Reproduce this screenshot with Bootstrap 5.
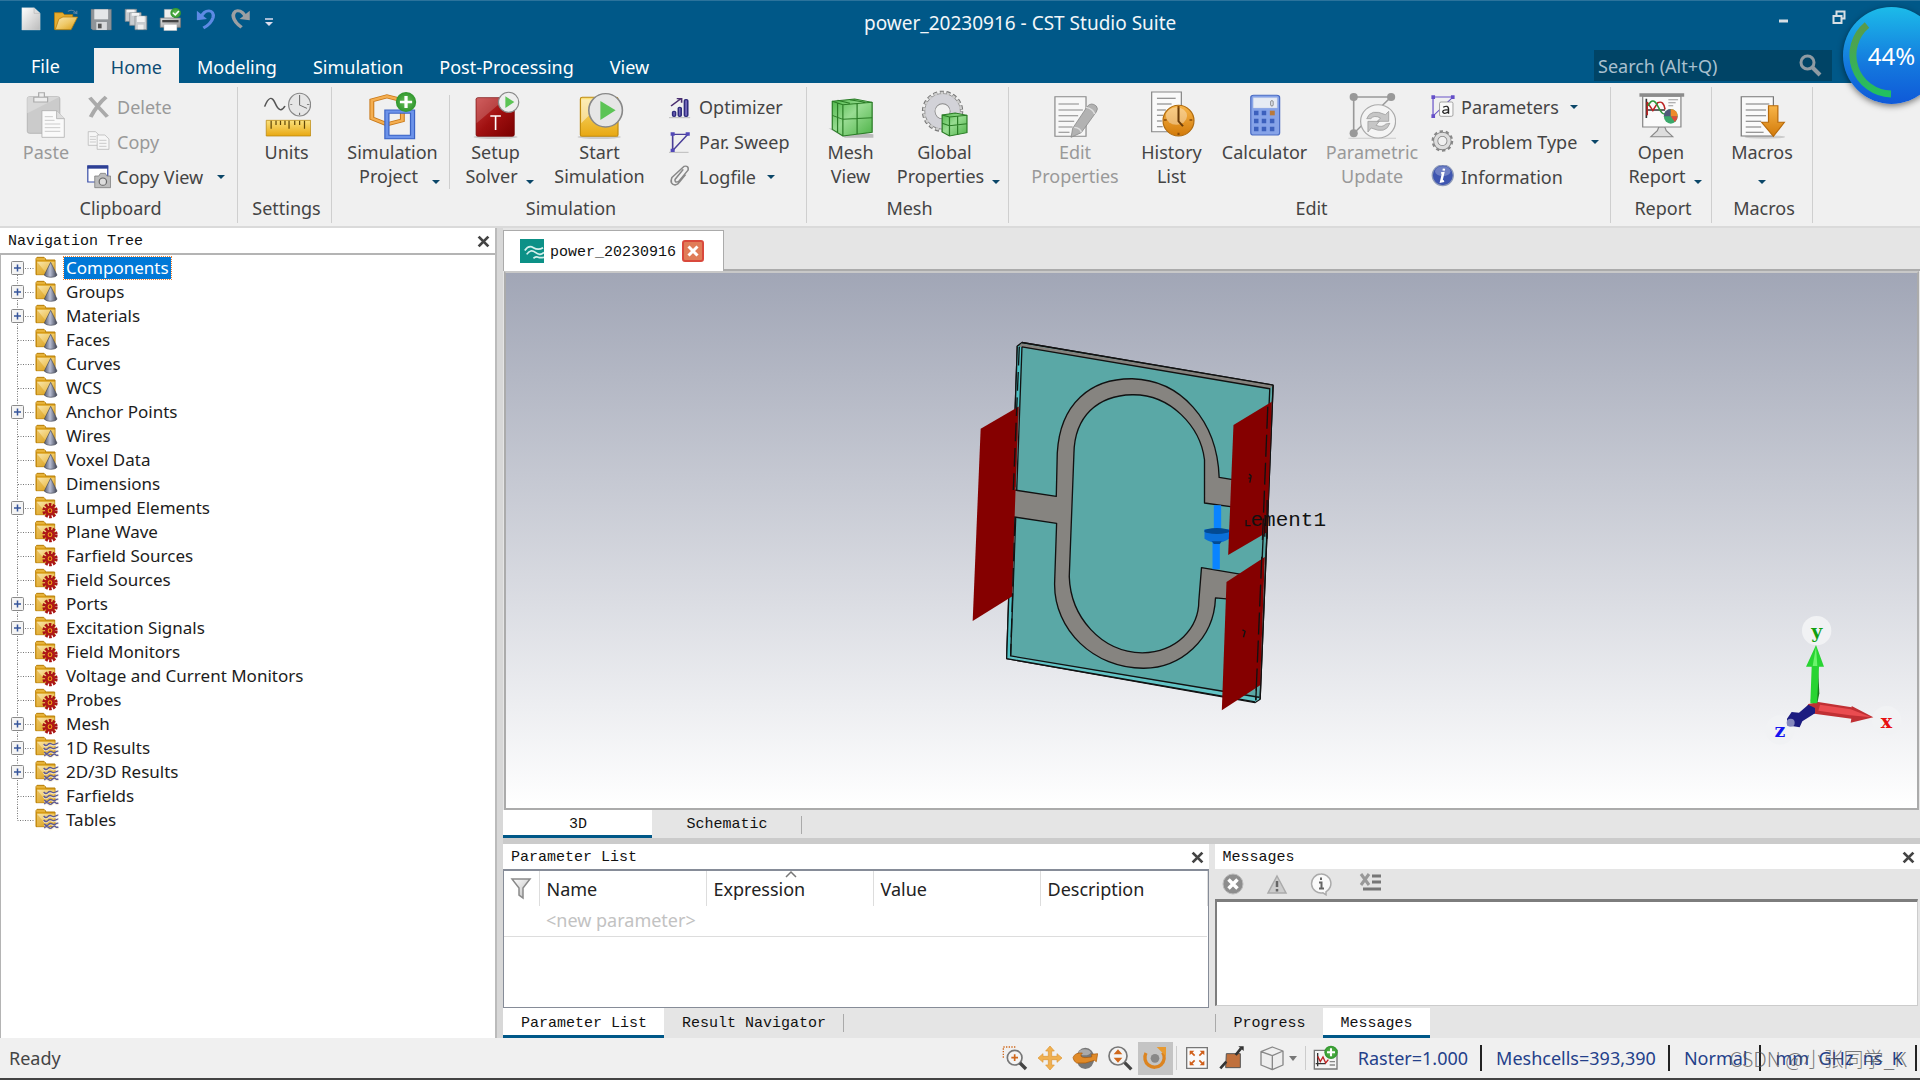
<!DOCTYPE html>
<html lang="en">
<head>
<meta charset="utf-8">
<meta name="viewport" content="width=device-width, initial-scale=1">
<title>power_20230916 - CST Studio Suite</title>
<link href="https://cdn.jsdelivr.net/npm/bootstrap@5.3.0/dist/css/bootstrap.min.css" rel="stylesheet">
<style>
:root{--brand:#005888;--panel:#e5e5e5;--ribbon:#f0f0f0;--ui:"Noto Sans","Noto Sans CJK SC",sans-serif;--fixed:"Liberation Mono","Noto Sans CJK SC",monospace}
body{font-family:var(--ui);font-size:18px;line-height:24px;color:#444;background:var(--ribbon);min-width:1200px}
svg{display:block;flex:none}
button{font:inherit;color:inherit}
.bare{background:none;border:0;padding:0}
.top-bar{background:var(--brand);border-top:1px solid #2b739c;color:#fff}
.title-row{height:47px}
.qat{flex:0 0 45%;padding-left:19px;gap:11px;padding-top:6px}
.app-title{font-size:19px;color:#f2f6f9;padding-bottom:4px}
.menu-row{height:35px}
.menu-tab{display:flex;align-items:center;height:35px;padding:2px 18px 0;color:#fff;text-decoration:none}
.menu-tab:first-child{padding:0 34px 0 31px}
.menu-tab.current{background:var(--ribbon);color:#0d4b73;padding:2px 17px 0}
.find-box{width:238px;height:31px;background:#004466;margin-right:88px;padding:0 10px 0 4px}
.find-box input{background:none;border:0;outline:0;color:#fff;min-width:0;flex:1;padding:0;font-size:18px}
.find-box input::placeholder{color:#a9c0cf;opacity:1}
.win-btns{gap:42px;padding-right:74px;padding-top:8px}
.progress-ball{position:absolute;top:6px;right:-20px;width:97px;height:97px;border-radius:50%;background:linear-gradient(#1cbbe9,#1478de 60%,#0f59d8);box-shadow:0 2px 6px rgba(0,0,0,.5);color:#fff;font-size:24px;display:flex;align-items:center;justify-content:center;z-index:5}
.progress-ball svg{position:absolute;inset:0}
.ball-clip{position:absolute;top:0;right:0;width:110px;height:120px;overflow:hidden;pointer-events:none}
.ribbon{background:var(--ribbon);border-bottom:2px solid #dadada;padding-top:4px;height:145px}
.rgroup{height:136px;border-right:1px solid #cfcfcf;padding-top:3px;text-align:center}
.rbody{height:106px}
.rname{padding-left:4px}
.big{display:flex;flex-direction:column;align-items:center;white-space:nowrap;height:100px}
.sml{display:flex;align-items:center;height:35px;gap:6px;white-space:nowrap;padding-bottom:2px}
.off{color:#999!important}
.tri{display:inline-block;width:0;height:0;border:4px solid transparent;border-top-color:#0b4668;border-bottom:0;vertical-align:middle}
.big .tri{margin:8px -8px 0 8px}
.big .tri.far{margin-left:14px;margin-right:-14px}
.big .tri.solo{margin:8px 0 0}
.sml .tri{margin-left:5px}
.inner-rule{width:1px;height:94px;background:#cfcfcf;margin-top:5px}
.fixed{font-family:var(--fixed);font-size:15px;color:#111}
.nav-panel{flex:0 0 497px;background:#fff;border-right:2px solid #bbb}
.panel-head{height:25px;background:#fff;flex:none;padding:2px 5px 0 8px}
.tree{list-style:none;margin:0;padding:1px 0 0 10px;border-top:2px solid #b4b4b4;border-left:1px solid #b4b4b4;flex:1;color:#1c1c1c;font-size:17px}
.tree li{display:flex;height:24px;align-items:center}
.tree span{margin-left:5px;padding:0 2px;line-height:22px}
.tree .picked{background:#0078d7;color:#fff;outline:1px dotted #f08030}
.splitter{width:6px;background:#d8d8d8;flex:none}
.work{background:var(--panel);min-width:0}
.doc-tabs{height:43px;border-bottom:2px solid #ababab;padding-top:2px}
.doc-tab{background:#fff;border:1px solid #ababab;border-bottom:0;width:221px;height:41px;padding-left:16px;gap:6px}
.viewport{border:2px solid #ababab;border-top-color:#c8c8c8;background:linear-gradient(#a1a6b6,#fff);flex:1;min-height:0;margin:0 1px 0 1px;position:relative}
.viewport svg.model{width:100%;height:100%}
.axes{position:absolute;right:0;bottom:48px}
.flat-tab{display:flex;align-items:center;justify-content:center;height:100%;color:#111;text-decoration:none;padding:2px 17px 0 18px}
.flat-tab.open{background:#fff;border-bottom:3px solid var(--brand);padding-top:4px}
.tick-bar{width:1px;height:18px;background:#aaa;margin-top:6px}
.sheet-tabs{height:28px;flex:none}
.dock{height:200px;flex:none;border-top:6px solid #cbcbcb;gap:6px}
.dock>section{flex:1 1 0;min-width:0}
.dock-tabs{height:30px;flex:none}
.grid-box{border:1px solid #868c98;border-top-width:2px;background:#fff;flex:1;min-height:0}
.grid-box table{width:100%;table-layout:fixed;color:#222}
.grid-box th{font-weight:400;height:35px;padding:1px 7px 0;border-right:1px solid #ddd}
.grid-box td{height:30px;padding:0 7px 2px;border-bottom:1px solid #ddd;color:#c2c2c2}
.grid-box th:first-child{padding:0 6px;width:35px}
.msg-tools{height:30px;padding-left:6px;gap:20px;flex:none}
.msg-area{flex:1;resize:none;background:#fff;border:1px solid #ccc;border-top:3px solid #7d7d7d;border-left:2px solid #7d7d7d;margin:0 2px 2px 0;outline:0}
.status{height:42px;flex:none;border-bottom:2px solid #444;padding-left:9px;position:relative}
.status .vals{color:#24408a}
.status .vals span{border-right:2px solid #222;line-height:26px;padding:0 12px 0 14px;white-space:pre}
.st{width:35px;height:33px;display:flex;align-items:center;justify-content:center}
.st.on{background:#c4c4c4}
.st-rule{width:1px;height:24px;background:#ccc;margin:0 3px}
.stamp{position:absolute;right:13px;top:9px;font-size:20px;font-weight:300;color:rgba(80,80,80,.75);font-family:"Noto Sans CJK SC",sans-serif}
</style>
<script src="https://cdn.jsdelivr.net/npm/bootstrap@5.3.0/dist/js/bootstrap.bundle.min.js"></script>
</head>
<body class="vh-100 d-flex flex-column overflow-hidden">

<svg width="0" height="0" class="position-absolute">
<defs>
<linearGradient id="gold" x1="0" y1="0" x2="1" y2="1"><stop offset="0" stop-color="#f8e6ae"/><stop offset=".5" stop-color="#efc968"/><stop offset="1" stop-color="#d89a10"/></linearGradient>
<linearGradient id="amber" x1="0" y1="0" x2="0" y2="1"><stop offset="0" stop-color="#fbe17c"/><stop offset="1" stop-color="#e8a812"/></linearGradient>
<linearGradient id="silver" x1="0" y1="0" x2="1" y2="1"><stop offset="0" stop-color="#fff"/><stop offset="1" stop-color="#bbb"/></linearGradient>
<linearGradient id="grey" x1="0" y1="0" x2="1" y2="1"><stop offset="0" stop-color="#ddd"/><stop offset="1" stop-color="#999"/></linearGradient>
<linearGradient id="cone" x1="0" x2="1"><stop offset="0" stop-color="#555a6c"/><stop offset=".45" stop-color="#b9bfd4"/><stop offset="1" stop-color="#3d4150"/></linearGradient>
<linearGradient id="red" x1="0" y1="0" x2="1" y2="1"><stop offset="0" stop-color="#c63b3b"/><stop offset=".5" stop-color="#a01010"/><stop offset="1" stop-color="#7a0000"/></linearGradient>
<radialGradient id="green"><stop offset="0" stop-color="#6cc05c"/><stop offset="1" stop-color="#2f962c"/></radialGradient>
<linearGradient id="lime" x1="0" y1="0" x2="1" y2="1"><stop offset="0" stop-color="#4fb74a"/><stop offset=".45" stop-color="#98dc92"/><stop offset="1" stop-color="#4eb348"/></linearGradient>
<linearGradient id="orange" x1="0" y1="0" x2="0" y2="1"><stop offset="0" stop-color="#f8b548"/><stop offset="1" stop-color="#d27a0a"/></linearGradient>
<g id="folder"><path d="M108 100l3-4h21l5 5v3h28v44h-57z" fill="#d99c14" stroke="#b8800c" stroke-width="3"/><path d="M111 109h53v38h-53z" fill="url(#gold)"/><path d="M111 109v38h30z" fill="#d89a10" opacity=".45"/><path d="M109 101h26" stroke="#f2c860" stroke-width="3"/></g>
<symbol id="f-cone" viewBox="105 92 72 72"><use href="#folder"/><path d="M152 111l19 38c-3 9-33 9-38 0z" fill="url(#cone)" stroke="#444857" stroke-width="2"/></symbol>
<symbol id="f-gear" viewBox="105 92 72 72"><g transform="translate(-1)"><use href="#folder"/></g><g transform="translate(150 136)"><circle r="18" fill="none" stroke="#a81414" stroke-width="10" stroke-dasharray="7.500 3.810"/><circle r="11" fill="#f0a818" stroke="#b01818" stroke-width="8"/><circle r="4" fill="#a81414"/></g></symbol>
<symbol id="f-wave" viewBox="105 92 72 72"><use href="#folder"/><path d="M131 116q6 8 12 2t12-2t12 0t8-2M131 128q6 8 12 2t12-2t12 0t8-2M133 140q6 8 12 2t12-2t10 0t8-2M133 152q6-8 12-2t12 0t10-2t8 0" fill="none" stroke="#f6ecd2" stroke-width="5" transform="translate(0 3)" opacity=".8"/><path d="M131 116q6 8 12 2t12-2t12 0t8-2M131 128q6 8 12 2t12-2t12 0t8-2M133 140q6 8 12 2t12-2t10 0t8-2M133 152q6-8 12-2t12 0t10-2t8 0" fill="none" stroke="#5c5a96" stroke-width="4"/></symbol>
<g id="box"><rect x=".5" y="5.500" width="12" height="13" rx="1" fill="#f4f4f4" stroke="#8a8a8a"/><path d="M3 12h7M6.500 8.500v7" stroke="#36559b" stroke-width="1.500"/></g>
<symbol id="t-first" viewBox="0 0 24 24"><path d="M6.500 19v5M14 12.500h9" stroke="#777" stroke-dasharray="1 1.500" fill="none"/><use href="#box"/></symbol>
<symbol id="t-plus" viewBox="0 0 24 24"><path d="M6.500 0v24M14 12.500h9" stroke="#777" stroke-dasharray="1 1.500" fill="none"/><use href="#box"/></symbol>
<symbol id="t-line" viewBox="0 0 24 24"><path d="M6.500 0v24M7 12.500h16" stroke="#777" stroke-dasharray="1 1.500" fill="none"/></symbol>
<symbol id="t-end" viewBox="0 0 24 24"><path d="M6.500 0v12.500h16" stroke="#777" stroke-dasharray="1 1.500" fill="none"/></symbol>
<symbol id="x-mark" viewBox="0 0 12 12"><path d="M1.500 1.500l9 9M10.500 1.500l-9 9" stroke="#444" stroke-width="2.600" fill="none"/></symbol>
</defs>
</svg>

<header class="top-bar position-relative flex-shrink-0">
  <div class="title-row d-flex align-items-start">
    <div class="qat d-flex">
      <button class="bare" aria-label="New"><svg width="24" height="24" viewBox="47 21 59 72" preserveAspectRatio="none"><path d="M54 23h30l15 17v50H54z" fill="url(#silver)" stroke="#cfd6da"/><path d="M84 23v17h15" fill="#ddd" stroke="#999"/></svg></button>
      <button class="bare" aria-label="Open"><svg width="24" height="24" viewBox="132 21 59 72" preserveAspectRatio="none"><path d="M133 38h20l5 6h20v12h-30l-10 32h-5z" fill="#e5ac2e" stroke="#b57c08" stroke-width="2"/><path d="M144 57l10-6h36l-16 38h-39z" fill="url(#gold)" stroke="#b57c08" stroke-width="2"/><path d="M166 34q12-8 20 4m2-6v9l-9-3" fill="none" stroke="#5f83a0" stroke-width="3"/></svg></button>
      <button class="bare" aria-label="Save"><svg width="24" height="24" viewBox="216 21 59 72" preserveAspectRatio="none"><path d="M221 28h50v62h-46l-4-5z" fill="#8f9498" stroke="#6b7075"/><path d="M229 28h34v30h-34z" fill="#e4e6e8"/><path d="M234 66h26v24h-26z" fill="#d8dadc"/><path d="M238 71h9v14h-9z" fill="#555"/></svg></button>
      <button class="bare" aria-label="Save all"><svg width="24" height="24" viewBox="300 21 59 72" preserveAspectRatio="none"><g fill="#c9cccf" stroke="#858a8f" stroke-width="2"><path d="M303 28h28v36h-28z"/><path d="M314 38h28v38h-28z"/><path d="M327 48h29v41h-29z"/></g><path d="M332 49h19v17h-19zM319 39h18v8h-18zM307 29h19v8h-19z" fill="#f3f3f3"/><path d="M334 74h14v14h-14z" fill="#eee"/></svg></button>
      <button class="bare" aria-label="Print"><svg width="24" height="24" viewBox="384 21 59 72" preserveAspectRatio="none"><path d="M397 28h24v28h-24z" fill="#eee" stroke="#999"/><path d="M387 54h50v28h-50z" fill="url(#grey)" stroke="#777" stroke-width="2"/><path d="M392 60h40v7h-40z" fill="#444"/><path d="M396 73h32v19h-32z" fill="#fff" stroke="#999"/><ellipse cx="425" cy="39" rx="13" ry="15" fill="url(#green)"/><path d="M418 38l6 7 9-12" fill="none" stroke="#fff" stroke-width="4"/></svg></button>
      <button class="bare" aria-label="Undo"><svg width="24" height="24" viewBox="471 21 59 72" preserveAspectRatio="none"><path d="M488 52C498 24 522 28 518 52Q513 72 494 84" fill="none" stroke="#5d8ae4" stroke-width="8"/><path d="M478 32v29l25-4z" fill="#5d8ae4"/></svg></button>
      <button class="bare" aria-label="Redo"><svg width="24" height="24" viewBox="557 21 59 72" preserveAspectRatio="none"><path d="M598 52C588 24 564 28 568 52Q571 68 588 82" fill="none" stroke="#9b9fa2" stroke-width="9"/><path d="M608 32v29l-25-4z" fill="#9b9fa2"/></svg></button>
      <button class="bare" aria-label="Customize toolbar"><svg width="10" height="24" viewBox="0 0 10 24"><path d="M1 12h8" stroke="#dde" stroke-width="1.500"/><path d="M1 15h8l-4 4z" fill="#dde"/></svg></button>
    </div>
    <div class="app-title align-self-center">power_20230916 - CST Studio Suite</div>
    <div class="win-btns d-flex ms-auto">
      <button class="bare" aria-label="Minimize"><svg width="12" height="18" viewBox="0 0 12 18"><path d="M1 12h9" stroke="#d8dfe4" stroke-width="3"/></svg></button>
      <button class="bare" aria-label="Restore"><svg width="14" height="18" viewBox="0 0 14 18"><path d="M4.500 6V2.500h8v7h-3M1.500 7h8v7h-8zM4 2.500h9M1 7h9" fill="none" stroke="#d8dfe4" stroke-width="2"/></svg></button>
    </div>
  </div>
  <div class="menu-row d-flex justify-content-between align-items-end">
    <nav class="d-flex">
      <a class="menu-tab" href="#">File</a><a class="menu-tab current" href="#">Home</a><a class="menu-tab" href="#">Modeling</a><a class="menu-tab" href="#">Simulation</a><a class="menu-tab" href="#">Post-Processing</a><a class="menu-tab" href="#">View</a>
    </nav>
    <div class="find-box d-flex align-items-center align-self-center">
      <input type="search" placeholder="Search (Alt+Q)" aria-label="Search (Alt+Q)">
      <svg width="24" height="24" viewBox="0 0 24 24"><circle cx="9.500" cy="8.500" r="6.500" fill="none" stroke="#8f9ba3" stroke-width="3"/><path d="M14 13l8 8" stroke="#8f9ba3" stroke-width="4"/></svg>
    </div>
  </div>
  <div class="ball-clip"><div class="progress-ball"><svg width="97" height="97" viewBox="0 0 97 97"><defs><linearGradient id="arc" x1="0" y1="0" x2="0" y2="1"><stop offset="0" stop-color="#5a9a4a"/><stop offset="1" stop-color="#22c060"/></linearGradient></defs><path d="M24 18A39 39 0 0 0 48 87" fill="none" stroke="url(#arc)" stroke-width="7"/></svg><span>44%</span></div></div>
</header>

<div class="ribbon d-flex flex-shrink-0">
  <div class="rgroup" style="width:238px">
    <div class="rbody d-flex" style="padding-left:8px">
      <button class="bare big off" style="width:76px"><svg class="pic" width="48" height="50" viewBox="54 270 118 150" preserveAspectRatio="none"><rect x="67" y="290" width="80" height="110" rx="6" fill="#cbcbcb" stroke="#aaa" stroke-width="2"/><path d="M67 340l80-50v-0H73q-6 0-6 6z" fill="#d8d8d8"/><path d="M83 292h34v14H83zM95 290v-12h14v12" fill="#eee" stroke="#aaa" stroke-width="3"/><path d="M103 332h36l19 24v56h-55z" fill="#fafafa" stroke="#aaa" stroke-width="2"/><path d="M139 332v24h19" fill="#ddd" stroke="#aaa" stroke-width="2"/><path d="M110 350h20M110 361h24M110 372h38M110 383h38M110 394h38" stroke="#bbb" stroke-width="2"/></svg>Paste</button>
      <div style="padding-left:3px">
        <button class="bare sml off"><svg width="24" height="24" viewBox="213 285 59 72" preserveAspectRatio="none"><path d="M220 293q14 20 43 57M260 291q-20 20-38 60" stroke="#aaa" stroke-width="10" fill="none"/></svg>Delete</button>
        <button class="bare sml off"><svg width="24" height="24" viewBox="213 390 59 72" preserveAspectRatio="none"><g fill="#f6f6f6" stroke="#b5b5b5" stroke-width="2"><path d="M216 395h18l9 11v30h-27z"/><path d="M238 405h19l10 12v31h-29z"/></g><path d="M220 410h15M220 418h15M220 426h15M243 421h18M243 430h18M243 439h18" stroke="#bbb" stroke-width="2"/></svg>Copy</button>
        <button class="bare sml"><svg width="24" height="24" viewBox="213 495 59 72" preserveAspectRatio="none"><path d="M215 498h49v48h-49z" fill="#fff" stroke="#3a4fa8" stroke-width="3"/><path d="M214 496h51v10h-51z" fill="#2d3f94"/><path d="M232 528h10l4-8h12l4 8h9v35h-39z" fill="#bcbcbc" stroke="#777" stroke-width="2"/><ellipse cx="252" cy="545" rx="9" ry="11" fill="#ddd" stroke="#666" stroke-width="3"/></svg>Copy View<i class="tri ms-2"></i></button>
      </div>
    </div>
    <div class="rname">Clipboard</div>
  </div>
  <div class="rgroup" style="width:94px">
    <div class="rbody rname"><button class="bare big w-100"><svg class="pic" width="48" height="50" viewBox="639 270 118 150" preserveAspectRatio="none"><path d="M643 320q14-44 26-10t24 8" fill="none" stroke="#555" stroke-width="4"/><ellipse cx="729" cy="314" rx="27" ry="34" fill="#e6e6e6" stroke="#888" stroke-width="3"/><path d="M729 285v30l18 10M729 338v7M706 314h5M747 314h6" fill="none" stroke="#666" stroke-width="2.500"/><path d="M647 361h109v47H647z" fill="url(#amber)" stroke="#b8860e" stroke-width="2"/><path d="M659 362v24M671 362v13M682 362v13M693 362v13M703 362v24M717 362v13M729 362v13M741 362v24" stroke="#604708" stroke-width="3"/></svg>Units</button></div>
    <div class="rname">Settings</div>
  </div>
  <div class="rgroup" style="width:475px">
    <div class="rbody d-flex">
      <button class="bare big ps-1" style="width:117px"><svg class="pic" width="48" height="50" viewBox="902 270 118 150" preserveAspectRatio="none"><path d="M909 301l37-12 38 12v60l-38 12-37-18z" fill="none" stroke="#c87818" stroke-width="12"/><path d="M909 301l37-12 38 12v60l-38 12-37-18z" fill="none" stroke="#f4ae50" stroke-width="7"/><path d="M946 335h63v76h-63z" fill="none" stroke="#3b63c4" stroke-width="13"/><path d="M946 335h63v76h-63z" fill="none" stroke="#6c93ea" stroke-width="7"/><ellipse cx="993" cy="306" rx="25" ry="30" fill="url(#green)"/><path d="M978 306h30M993 288v36" stroke="#fff" stroke-width="8"/></svg><span>Simulation<br>Project<i class="tri far"></i></span></button>
      <div class="inner-rule"></div>
      <button class="bare big" style="width:91px"><svg class="pic" width="48" height="50" viewBox="1156 270 118 150" preserveAspectRatio="none"><ellipse cx="1214" cy="411" rx="54" ry="6" fill="#ccc"/><rect x="1166" y="293" width="94" height="116" rx="5" fill="url(#red)" stroke="#780808" stroke-width="2"/><path d="M1167 370V298q0-5 4-5h70z" fill="#fff" opacity=".18"/><path d="M1201 348h26M1214 348v42" stroke="#fff" stroke-width="4"/><ellipse cx="1246" cy="307" rx="25" ry="30" fill="#eee" stroke="#888" stroke-width="3"/><path d="M1238 289l22 17-22 18z" fill="#5cc455"/></svg><span>Setup<br>Solver<i class="tri"></i></span></button>
      <button class="bare big" style="width:117px"><svg class="pic" width="48" height="50" viewBox="1412 270 120 150" preserveAspectRatio="none"><ellipse cx="1470" cy="411" rx="54" ry="6" fill="#ccc"/><rect x="1423" y="292" width="94" height="117" rx="5" fill="url(#amber)" stroke="#c08c10" stroke-width="3"/><path d="M1425 370V298h60z" fill="#fff" opacity=".45"/><ellipse cx="1486" cy="331" rx="42" ry="50" fill="#e6e6e6" stroke="#888" stroke-width="4"/><path d="M1473 303l38 28-38 29z" fill="#5cc455"/></svg><span>Start<br>Simulation</span></button>
      <div style="padding-left:11px">
        <button class="bare sml"><svg width="24" height="24" viewBox="71 285 59 72" preserveAspectRatio="none"><path d="M71 353h52" stroke="#bbb" stroke-width="3"/><g fill="#7d6fc4" stroke="#2e2c7c" stroke-width="4"><rect x="80" y="334" width="7" height="15" rx="3"/><rect x="94" y="322" width="7" height="27" rx="3"/><rect x="109" y="299" width="8" height="50" rx="3"/></g><path d="M76 318l24-22M90 296h12v12" fill="none" stroke="#4b2f70" stroke-width="4"/></svg>Optimizer</button>
        <button class="bare sml"><svg width="24" height="24" viewBox="71 390 59 72" preserveAspectRatio="none"><path d="M71 457h48" stroke="#bbb" stroke-width="3"/><path d="M80 452V403h37L80 452" fill="none" stroke="#4a3e98" stroke-width="4"/><path d="M75 397h10v10H75zM112 397h10v10h-10zM75 446h10v10H75z" fill="#5248b8"/></svg>Par. Sweep</button>
        <button class="bare sml"><svg width="24" height="24" viewBox="71 495 59 72" preserveAspectRatio="none"><path d="M106 508l-20 30q-2 12 9 6l23-34q2-14-10-11L78 533q-6 20 8 22 8-2 10-8l16-24" fill="none" stroke="#888" stroke-width="4"/></svg>Logfile<i class="tri"></i></button>
      </div>
    </div>
    <div class="rname">Simulation</div>
  </div>
  <div class="rgroup" style="width:202px">
    <div class="rbody d-flex">
      <button class="bare big" style="width:87px"><svg class="pic" width="48" height="50" viewBox="456 270 118 150" preserveAspectRatio="none"><path d="M460 385l40 28h70v-10z" fill="#bbb"/><path d="M469 304l55-7 43 10v90l-72 11-26-20z" fill="url(#lime)" stroke="#2a7c26" stroke-width="3"/><path d="M469 304l26 10 72-7M495 314v94M482 309v88M530 310v92M469 346l26 12 72-5M482 301l30 9M512 299l38 8" fill="none" stroke="#2a7c26" stroke-width="3"/></svg><span>Mesh<br>View</span></button>
      <button class="bare big" style="width:101px"><svg class="pic" width="48" height="50" viewBox="686 270 118 150" preserveAspectRatio="none"><g transform="translate(739 334) scale(.82 1)"><circle r="57" fill="none" stroke="#777" stroke-width="10" stroke-dasharray="12 7.900"/><circle r="38" fill="none" stroke="#888" stroke-width="33"/><circle r="38" fill="none" stroke="#d2d2d8" stroke-width="28"/><circle r="55" fill="none" stroke="#ccc" stroke-width="8" stroke-dasharray="9 10.190" stroke-dashoffset="-1.500"/></g><path d="M738 345l32-6 29 7v52l-43 10-18-12z" fill="url(#lime)" stroke="#2a7c26" stroke-width="3"/><path d="M738 345l18 6 43-5M756 351v57M776 349v55M738 370l18 7 43-6" fill="none" stroke="#2a7c26" stroke-width="3"/></svg><span>Global<br>Properties<i class="tri"></i></span></button>
    </div>
    <div class="rname">Mesh</div>
  </div>
  <div class="rgroup" style="width:602px">
    <div class="rbody d-flex">
      <button class="bare big off" style="width:132px"><svg class="pic" width="48" height="50" viewBox="1007 270 122 150" preserveAspectRatio="none"><path d="M1017 290h79v119h-79z" fill="#f7f7f7" stroke="#888" stroke-width="3"/><path d="M1026 312h52M1026 330h62M1026 347h50M1026 364h40M1026 381h36M1026 397h28" stroke="#888" stroke-width="3"/><path d="M1062 385l38-67q10-12 22 0 6 8 0 18l-38 62-26 14z" fill="#b2b2b2" stroke="#858585" stroke-width="2"/><path d="M1066 382q16 2 18 15M1096 322q18 4 22 20" fill="none" stroke="#ddd" stroke-width="4"/></svg><span>Edit<br>Properties</span></button>
      <button class="bare big" style="width:61px"><svg class="pic" width="48" height="50" viewBox="1242 270 118 150" preserveAspectRatio="none"><path d="M1251 276h73v119h-73z" fill="#fafafa" stroke="#888" stroke-width="3"/><path d="M1264 295h46M1264 312h36M1264 330h22M1264 346h15M1264 363h12M1264 380h14" stroke="#777" stroke-width="3"/><ellipse cx="1317" cy="362" rx="38" ry="46" fill="url(#orange)" stroke="#b06c10" stroke-width="3"/><ellipse cx="1312" cy="348" rx="26" ry="26" fill="#fff" opacity=".35"/><path d="M1317 324v40l11 15" fill="none" stroke="#6a3b08" stroke-width="5"/><path d="M1317 318v7M1317 398v7M1281 360h7M1344 360h7" stroke="#8a4b08" stroke-width="5"/></svg><span>History<br>List</span></button>
      <button class="bare big" style="width:125px"><svg class="pic" width="48" height="50" viewBox="1470 270 118 150" preserveAspectRatio="none"><rect x="1494" y="286" width="71" height="119" rx="7" fill="#86a3e8" stroke="#4a6cc4" stroke-width="3"/><path d="M1500 293h59v31h-59z" fill="#e6ebf4" stroke="#bcc8e0"/><rect x="1543" y="302" width="6" height="16" rx="3" fill="none" stroke="#666" stroke-width="2"/><g fill="#3c60bd"><path d="M1502 332h11v14h-11zM1521 332h11v14h-11zM1502 356h11v14h-11zM1521 356h11v14h-11zM1541 356h11v14h-11zM1502 380h11v14h-11zM1521 380h11v14h-11zM1541 380h11v14h-11z"/></g><path d="M1541 332h12v14h-12z" fill="#b9793a"/></svg>Calculator</button>
      <button class="bare big off" style="width:90px"><svg class="pic" width="48" height="50" viewBox="167 270 118 150" preserveAspectRatio="none"><path d="M168 415h117" stroke="#ccc" stroke-width="3"/><path d="M181 400V291h92L181 400" fill="none" stroke="#999" stroke-width="4"/><g fill="#999"><ellipse cx="181" cy="291" rx="10" ry="12"/><ellipse cx="273" cy="291" rx="10" ry="12"/><ellipse cx="181" cy="400" rx="10" ry="12"/></g><ellipse cx="241" cy="364" rx="43" ry="50" fill="#f4f4f4" stroke="#aaa" stroke-width="3"/><path d="M213 356q10-32 46-12l8-10v30h-28l8-10q-16-10-24 2zM270 370q-10 34-46 14l-8 12v-32h28l-8 12q16 8 24-4z" fill="#c6c6c6" stroke="#999" stroke-width="2"/></svg><span>Parametric<br>Update</span></button>
      <div style="padding-left:14px">
        <button class="bare sml"><svg width="24" height="24" viewBox="370 285 59 72" preserveAspectRatio="none"><path d="M375 348V291h49l-49 57" fill="none" stroke="#6a55c8" stroke-width="3"/><path d="M371 286h9v11h-9zM419 286h9v11h-9zM371 343h9v11h-9z" fill="#6550c8"/><rect x="391" y="306" width="33" height="43" rx="4" fill="#fafafa" stroke="#888" stroke-width="2"/><path d="M400 322q12-8 13 4v15M412 330q-14-2-13 6 3 8 13 0" fill="none" stroke="#222" stroke-width="3.500"/></svg>Parameters<i class="tri"></i></button>
        <button class="bare sml"><svg width="24" height="24" viewBox="370 390 59 72" preserveAspectRatio="none"><g transform="translate(398 423) scale(.82 1)"><circle r="29" fill="none" stroke="#888" stroke-width="7" stroke-dasharray="10 8.220"/><circle r="20" fill="none" stroke="#858585" stroke-width="15"/><circle r="20" fill="none" stroke="#ddd" stroke-width="10"/></g></svg>Problem Type<i class="tri ms-2"></i></button>
        <button class="bare sml"><svg width="24" height="24" viewBox="370 495 59 72" preserveAspectRatio="none"><ellipse cx="399" cy="526" rx="26" ry="31" fill="#3f56b0" stroke="#8f9bb8" stroke-width="3"/><ellipse cx="399" cy="514" rx="19" ry="15" fill="#fff" opacity=".25"/><path d="M402 506l-1 6M395 520l5-1-5 26 7-2" fill="none" stroke="#fff" stroke-width="6"/></svg>Information</button>
      </div>
    </div>
    <div class="rname">Edit</div>
  </div>
  <div class="rgroup" style="width:101px">
    <div class="rbody"><button class="bare big w-100"><svg class="pic" width="48" height="50" viewBox="875 270 118 150" preserveAspectRatio="none"><path d="M929 380h14l4 12 16 18h-54l16-18z" fill="#ddd" stroke="#888" stroke-width="3"/><path d="M889 289h94v92h-94z" fill="#fafafa" stroke="#888" stroke-width="3"/><path d="M881 280h110v10H881z" fill="#8c8c8c"/><path d="M898 296v58M898 330h46" stroke="#333" stroke-width="4"/><path d="M900 346V306l14 26 12-24q14-8 18 20" fill="none" stroke="#b22" stroke-width="4"/><path d="M902 318q12-30 24 0t18 22" fill="none" stroke="#2a9a3a" stroke-width="4"/><path d="M952 299h24M952 308h18M952 317h12" stroke="#999" stroke-width="3"/><ellipse cx="958" cy="349" rx="17" ry="22" fill="#3aa86b"/><path d="M958 349v-22q-17 2-17 22z" fill="#50597a"/><path d="M958 349v-22q17 2 17 22z" fill="#ee8a2a"/><path d="M958 349h17q0 10-7 17z" fill="#e04a3a"/></svg><span>Open<br>Report<i class="tri"></i></span></button></div>
    <div class="rname">Report</div>
  </div>
  <div class="rgroup" style="width:101px">
    <div class="rbody"><button class="bare big w-100"><svg class="pic" width="48" height="50" viewBox="1124 270 118 150" preserveAspectRatio="none"><ellipse cx="1190" cy="411" rx="50" ry="5" fill="#ccc"/><path d="M1132 290h79v118h-79z" fill="#fafafa" stroke="#777" stroke-width="3"/><path d="M1143 312h58M1143 330h50M1143 347h50M1143 364h38M1143 381h38M1143 397h44" stroke="#777" stroke-width="3"/><path d="M1199 317h23v50h16l-27 42-29-42h17z" fill="url(#orange)" stroke="#b86a0a" stroke-width="3"/></svg><span>Macros<br><i class="tri solo"></i></span></button></div>
    <div class="rname">Macros</div>
  </div>
</div>

<main class="d-flex flex-grow-1" style="min-height:0">
  <aside class="nav-panel d-flex flex-column">
    <div class="panel-head fixed d-flex align-items-center justify-content-between"><span>Navigation Tree</span><button class="bare" aria-label="Close navigation tree"><svg width="13" height="13"><use href="#x-mark"/></svg></button></div>
    <ul class="tree">
      <li><svg width="24" height="24"><use href="#t-first"/></svg><svg width="24" height="24"><use href="#f-cone"/></svg><span class="picked">Components</span></li>
      <li><svg width="24" height="24"><use href="#t-plus"/></svg><svg width="24" height="24"><use href="#f-cone"/></svg><span>Groups</span></li>
      <li><svg width="24" height="24"><use href="#t-plus"/></svg><svg width="24" height="24"><use href="#f-cone"/></svg><span>Materials</span></li>
      <li><svg width="24" height="24"><use href="#t-line"/></svg><svg width="24" height="24"><use href="#f-cone"/></svg><span>Faces</span></li>
      <li><svg width="24" height="24"><use href="#t-line"/></svg><svg width="24" height="24"><use href="#f-cone"/></svg><span>Curves</span></li>
      <li><svg width="24" height="24"><use href="#t-line"/></svg><svg width="24" height="24"><use href="#f-cone"/></svg><span>WCS</span></li>
      <li><svg width="24" height="24"><use href="#t-plus"/></svg><svg width="24" height="24"><use href="#f-cone"/></svg><span>Anchor Points</span></li>
      <li><svg width="24" height="24"><use href="#t-line"/></svg><svg width="24" height="24"><use href="#f-cone"/></svg><span>Wires</span></li>
      <li><svg width="24" height="24"><use href="#t-line"/></svg><svg width="24" height="24"><use href="#f-cone"/></svg><span>Voxel Data</span></li>
      <li><svg width="24" height="24"><use href="#t-line"/></svg><svg width="24" height="24"><use href="#f-cone"/></svg><span>Dimensions</span></li>
      <li><svg width="24" height="24"><use href="#t-plus"/></svg><svg width="24" height="24"><use href="#f-gear"/></svg><span>Lumped Elements</span></li>
      <li><svg width="24" height="24"><use href="#t-line"/></svg><svg width="24" height="24"><use href="#f-gear"/></svg><span>Plane Wave</span></li>
      <li><svg width="24" height="24"><use href="#t-line"/></svg><svg width="24" height="24"><use href="#f-gear"/></svg><span>Farfield Sources</span></li>
      <li><svg width="24" height="24"><use href="#t-line"/></svg><svg width="24" height="24"><use href="#f-gear"/></svg><span>Field Sources</span></li>
      <li><svg width="24" height="24"><use href="#t-plus"/></svg><svg width="24" height="24"><use href="#f-gear"/></svg><span>Ports</span></li>
      <li><svg width="24" height="24"><use href="#t-plus"/></svg><svg width="24" height="24"><use href="#f-gear"/></svg><span>Excitation Signals</span></li>
      <li><svg width="24" height="24"><use href="#t-line"/></svg><svg width="24" height="24"><use href="#f-gear"/></svg><span>Field Monitors</span></li>
      <li><svg width="24" height="24"><use href="#t-line"/></svg><svg width="24" height="24"><use href="#f-gear"/></svg><span>Voltage and Current Monitors</span></li>
      <li><svg width="24" height="24"><use href="#t-line"/></svg><svg width="24" height="24"><use href="#f-gear"/></svg><span>Probes</span></li>
      <li><svg width="24" height="24"><use href="#t-plus"/></svg><svg width="24" height="24"><use href="#f-gear"/></svg><span>Mesh</span></li>
      <li><svg width="24" height="24"><use href="#t-plus"/></svg><svg width="24" height="24"><use href="#f-wave"/></svg><span>1D Results</span></li>
      <li><svg width="24" height="24"><use href="#t-plus"/></svg><svg width="24" height="24"><use href="#f-wave"/></svg><span>2D/3D Results</span></li>
      <li><svg width="24" height="24"><use href="#t-line"/></svg><svg width="24" height="24"><use href="#f-wave"/></svg><span>Farfields</span></li>
      <li><svg width="24" height="24"><use href="#t-end"/></svg><svg width="24" height="24"><use href="#f-wave"/></svg><span>Tables</span></li>
    </ul>
  </aside>
  <div class="splitter"></div>
  <section class="work flex-grow-1 d-flex flex-column">
    <div class="doc-tabs d-flex flex-shrink-0">
      <div class="doc-tab fixed d-flex align-items-center"><svg width="24" height="24" viewBox="0 0 25 25"><path d="M0 0h25v25H0z" fill="#0c9187"/><path d="M5 12q4-6 9-3t10 0M7 16q4-6 9-2t9 0M14 20q3-2 5-1t6 0" fill="none" stroke="#d5f0ec" stroke-width="1.800"/></svg><span class="pt-1">power_20230916</span><button class="bare" aria-label="Close document"><svg width="22" height="22" viewBox="0 0 22 22"><rect x="1" y="1" width="20" height="20" rx="2" fill="#e07c58" stroke="#d9493c" stroke-width="2"/><path d="M6.500 6.500l9 9M15.500 6.500l-9 9" stroke="#fff" stroke-width="3"/></svg></button></div>
    </div>
    <div class="viewport">
      <svg class="model" viewBox="505 273 1412 535" role="img" aria-label="3D model">
        <g transform="translate(950 320) scale(.33333)" stroke-linejoin="round">
          <path d="M214 67L968 195 929 1138 914 1148 168 1016 200 78z" fill="#5aa8a6" stroke="#111" stroke-width="4"/>
          <path d="M200 78l14 0-32 932-14 6z" fill="#4fc0c4"/>
          <path d="M182 1008l746 128-14 10L168 1016z" fill="#62c4c6"/>
          <path d="M212 70l756 126-10 10L206 80z" fill="#85827d"/>
          <path d="M214 80L958 206 916 1142M214 80L180 1008 926 1132M968 195L929 1138M214 67L968 195M200 78L168 1016 914 1146" fill="none" stroke="#111" stroke-width="4"/>
          <path d="M185 509l132 20 3-130C328 250 420 175 545 176C690 180 800 300 806 472l50 8v82l-94-13v-130C750 320 660 222 545 224C440 226 372 290 370 400l-14 370C360 890 450 996 575 999C680 996 745 925 745 842l8-99 120 20-20 76-58-5C790 960 690 1044 580 1045C430 1046 310 930 312 790l6-180-133-20z" fill="#868480" stroke="#111" stroke-width="4"/>
          <path d="M202 260l4 0-10 240-8 9zM194 592l-16 232 8 2z" fill="#60504f"/>
          <path d="M90 326l113-66-19 570-118 73z" fill="#850000"/>
          <path d="M206 80l-18 430M193 592l-13 416" stroke="#111" stroke-width="4" stroke-dasharray="56 20"/>
          <path d="M790 556h22v80h-22zM786 664h22v84h-22z" fill="#0a84ff"/>
          <path d="M762 628h74v28q-37 24-74 0z" fill="#0a6fd8"/><ellipse cx="799" cy="633" rx="38" ry="9" fill="#034a92"/><path d="M784 664h30l-6 8h-18z" fill="#034a92"/>
          <path d="M849 315l115-70-14 392-117 68z" fill="#850000"/>
          <path d="M828 786l115-75-14 385-115 75z" fill="#850000"/>
          <path d="M952 260l-16 400M934 710l-18 430" stroke="#111" stroke-width="4" stroke-dasharray="66 18"/>
          <path d="M950 540v116M943 610v40" stroke="#111" stroke-width="4"/>
          <path d="M896 462l6 6-4 20M894 474h8M876 930l8 4-5 18" fill="none" stroke="#111" stroke-width="4"/>
          <path d="M887 600v17h14" fill="none" stroke="#111" stroke-width="4"/>
        </g>
        <text x="1250" y="526" font-family="Liberation Mono, monospace" font-size="21" fill="#111">ement1</text>
      </svg>
      <svg class="axes" width="177" height="160" viewBox="0 0 531 480" role="img" aria-label="Axes">
        <g fill="#f1f2f4"><circle cx="230" cy="92" r="44"/><circle cx="440" cy="362" r="44"/><circle cx="120" cy="390" r="44"/></g>
        <path d="M205 312l30-6 100 16v-4l65 34-68 16 2-12-122-16-14-14z" fill="#c03034"/><path d="M240 314l92 14 62 24-64-6-95-14z" fill="#ea4c50"/>
        <path d="M234 200l4 80-6 30-20-8z" fill="#167c1c"/><path d="M215 200h22l-6 110h-20zM228 135l24 65h-54z" fill="#28d432"/><path d="M228 140l4 58h-14z" fill="#6cf46c"/>
        <path d="M205 314l20 10v16l-38 24-8 18-38-6v-20l14-20 22 2z" fill="#1c1c80"/><circle cx="152" cy="368" r="12" fill="#8588bd"/>
        <g font-family="DejaVu Serif, serif" font-weight="700" font-size="57" text-anchor="middle"><text x="230" y="114" fill="#10a010">y</text><text x="439" y="383" fill="#e81010">x</text><text x="120" y="410" fill="#1414f0">z</text></g>
      </svg>
    </div>
    <nav class="sheet-tabs fixed d-flex">
      <a class="flat-tab open" href="#" style="width:149px">3D</a><a class="flat-tab" href="#" style="width:149px">Schematic</a><div class="tick-bar"></div>
    </nav>
    <div class="dock d-flex">
      <section class="d-flex flex-column">
        <div class="panel-head fixed d-flex align-items-center justify-content-between"><span>Parameter List</span><button class="bare" aria-label="Close parameter list"><svg width="13" height="13"><use href="#x-mark"/></svg></button></div>
        <div class="grid-box">
          <table>
            <thead><tr><th aria-label="Filter"><svg width="22" height="24" viewBox="0 0 22 24"><path d="M2 2h18l-7 9v10l-4-3v-7z" fill="url(#silver)" stroke="#8a8a8a" stroke-width="1.500"/></svg></th><th>Name</th><th><div class="position-relative">Expression<svg class="position-absolute" style="left:47%;top:-7px" width="12" height="8" viewBox="0 0 12 8"><path d="M1 7l5-5 5 5" fill="none" stroke="#777" stroke-width="1.500"/></svg></div></th><th>Value</th><th>Description</th></tr></thead>
            <tbody><tr><td></td><td colspan="4">&lt;new parameter&gt;</td></tr></tbody>
          </table>
        </div>
        <nav class="dock-tabs fixed d-flex"><a class="flat-tab open" href="#">Parameter List</a><a class="flat-tab" href="#">Result Navigator</a><div class="tick-bar"></div></nav>
      </section>
      <section class="d-flex flex-column">
        <div class="panel-head fixed d-flex align-items-center justify-content-between"><span>Messages</span><button class="bare" aria-label="Close messages"><svg width="13" height="13"><use href="#x-mark"/></svg></button></div>
        <div class="msg-tools d-flex align-items-center">
          <button class="bare" aria-label="Errors"><svg width="24" height="24" viewBox="0 0 24 24"><circle cx="12" cy="12" r="10" fill="#8d8d8d" stroke="#bbb"/><path d="M7.500 7.500l9 9M16.500 7.500l-9 9" stroke="#fff" stroke-width="3.500"/></svg></button>
          <button class="bare" aria-label="Warnings"><svg width="24" height="24" viewBox="0 0 24 24"><path d="M12 4l9 17H3z" fill="#ccc" stroke="#aaa" stroke-width="1.500"/><path d="M12 9v6M12 17v2.500" stroke="#666" stroke-width="2.500"/></svg></button>
          <button class="bare" aria-label="Information"><svg width="24" height="24" viewBox="0 0 24 24"><path d="M12 2a9.500 9.500 0 1 0 2 18.800l3 2v-3A9.500 9.500 0 0 0 12 2z" fill="#fafafa" stroke="#aaa" stroke-width="1.500"/><path d="M12 5.500v2.500M10 10.500h2.500v6M10 16.500h5" fill="none" stroke="#666" stroke-width="2"/></svg></button>
          <button class="bare ms-1" aria-label="Clear messages"><svg width="24" height="24" viewBox="0 0 24 24"><path d="M4 2l8 11M12 2L4 13" stroke="#999" stroke-width="3"/><path d="M15 4h9M15 10h9M6 17h18" stroke="#777" stroke-width="3"/></svg></button>
        </div>
        <textarea class="msg-area" aria-label="Message log" readonly></textarea>
        <nav class="dock-tabs fixed d-flex"><div class="tick-bar"></div><a class="flat-tab" href="#">Progress</a><a class="flat-tab open" href="#">Messages</a></nav>
      </section>
    </div>
  </section>
</main>

<footer class="status d-flex align-items-center justify-content-between">
  <span>Ready</span>
  <div class="d-flex align-items-center">
    <button class="bare st" aria-label="Zoom window"><svg width="26" height="26" viewBox="0 0 78 78"><path d="M4 38V6h38" fill="none" stroke="#d0681c" stroke-width="4" stroke-dasharray="4 4"/><circle cx="38" cy="38" r="22" fill="#f4f4f4" stroke="#777" stroke-width="5"/><path d="M28 38h20M38 28v20" stroke="#d0681c" stroke-width="5"/><path d="M54 54l18 18" stroke="#444" stroke-width="10"/></svg></button>
    <button class="bare st" aria-label="Pan"><svg width="26" height="26" viewBox="0 0 78 78"><path d="M39 3l13 15h-8v16h16v-8l15 13-15 13v-8H44v16h8L39 75 26 60h8V44H18v8L3 39l15-13v8h16V18h-8z" fill="#f0b050" stroke="#dd9430" stroke-width="2"/></svg></button>
    <button class="bare st" aria-label="Rotate"><svg width="26" height="26" viewBox="0 0 78 78"><ellipse cx="40" cy="40" rx="27" ry="32" fill="#777"/><ellipse cx="38" cy="22" rx="18" ry="9" fill="#aaa"/><path d="M3 38q5-16 28-14-12 12 8 14l20-2v-8l18-2-4 24-6-4Q40 58 14 54 4 48 3 38z" fill="#e08a28" stroke="#a85808" stroke-width="2"/></svg></button>
    <button class="bare st" aria-label="Zoom"><svg width="26" height="26" viewBox="0 0 78 78"><circle cx="33" cy="33" r="27" fill="#f4f4f4" stroke="#777" stroke-width="5"/><path d="M33 13l13 15H20zM33 53l13-15H20z" fill="#d0681c"/><path d="M53 53l20 20" stroke="#444" stroke-width="10"/></svg></button>
    <button class="bare st on" aria-label="Rotate in plane"><svg width="26" height="26" viewBox="0 0 78 78"><path d="M12 24A29 29 0 1 0 62 22" fill="none" stroke="#dc8420" stroke-width="10"/><path d="M44 6h28v28z" fill="#e89a30"/><circle cx="39" cy="40" r="13" fill="#888"/></svg></button>
    <div class="st-rule"></div>
    <button class="bare st" aria-label="Reset view"><svg width="24" height="24" viewBox="0 0 72 72"><path d="M5 5h62v62H5z" fill="#fafafa" stroke="#777" stroke-width="4"/><path d="M14 14h14L14 28zM58 14v14L44 14zM14 58V44l14 14zM58 58H44l14-14z" fill="#d0601c"/><path d="M16 16l13 13M56 16L43 29M16 56l13-13M56 56L43 43" stroke="#d0601c" stroke-width="5"/></svg></button>
    <button class="bare st" aria-label="Working plane"><svg width="26" height="26" viewBox="0 0 78 78"><path d="M22 26h42v42H20z" fill="#c0703c" stroke="#555" stroke-width="3"/><path d="M50 30L66 10M4 70l18-20" stroke="#333" stroke-width="8"/><path d="M58 4h16v14z" fill="#333"/></svg></button>
    <button class="bare st ms-1" aria-label="View type" style="width:48px"><svg width="26" height="26" viewBox="0 0 78 78"><path d="M6 20L40 6l32 12v42L40 74 6 60zM6 20l34 12 32-14M40 32v42" fill="#eee" stroke="#888" stroke-width="4" stroke-linejoin="round"/></svg><svg class="ms-1" width="8" height="5" viewBox="0 0 8 5"><path d="M0 0h8L4 5z" fill="#777"/></svg></button>
    <div class="st-rule"></div>
    <button class="bare st" aria-label="Add report"><svg width="26" height="26" viewBox="0 0 78 78"><path d="M4 16h68v56H4z" fill="#f4f4f4" stroke="#777" stroke-width="4"/><path d="M14 24v40M8 56h30" stroke="#333" stroke-width="4"/><path d="M14 34l8 16 8-14 8 18 8-10" fill="none" stroke="#b22" stroke-width="4"/><path d="M50 50h16M50 60h16" stroke="#888" stroke-width="4"/><circle cx="54" cy="22" r="20" fill="url(#green)"/><path d="M42 22h24M54 10v24" stroke="#fff" stroke-width="6"/></svg></button>
    <div class="vals d-flex"><span>Raster=1.000</span><span>Meshcells=393,390</span><span>Normal</span><span>mm  GHz  ns  K</span></div>
    <div style="width:3px"></div>
  </div>
  <div class="stamp">CSDN @小张同学_K</div>
</footer>
</body>
</html>
